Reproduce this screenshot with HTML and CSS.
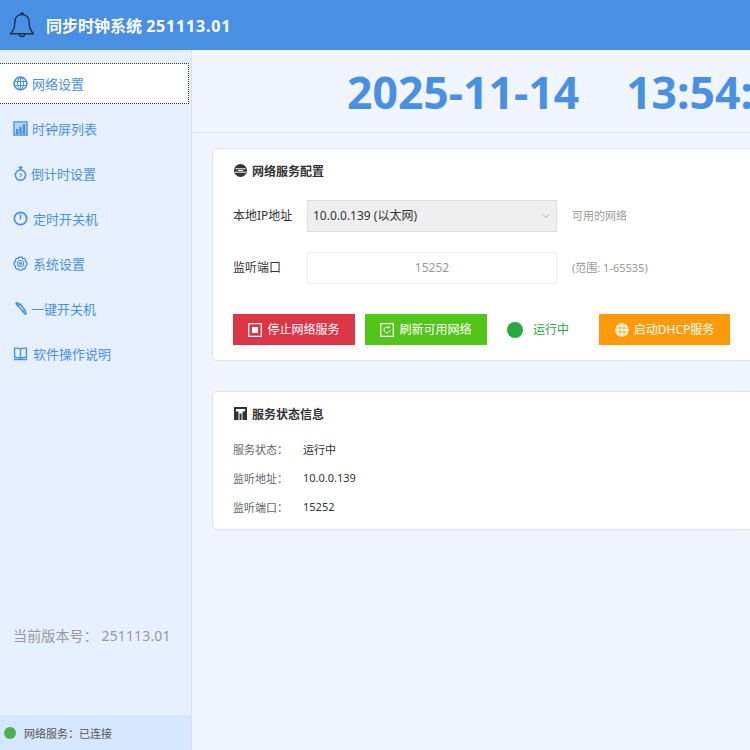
FILE: index.html
```html
<!DOCTYPE html>
<html lang="zh-CN">
<head>
    <meta charset="UTF-8">
    <title>同步时钟系统</title>
    <link rel="stylesheet" href="styles.css">
</head>
<body>
    <header class="topbar">
        <svg class="bell" viewBox="0 0 26 28" width="26" height="28" fill="none" stroke="#1f3350" stroke-width="1.5" stroke-linejoin="round">
            <path d="M13 3.500c-4.600 0-7.200 3.400-7.200 8 0 5-1 8-4.300 11.300h23C21.200 19.500 20.200 16.500 20.200 11.500c0-4.600-2.600-8-7.200-8z"/>
            <path d="M11.500 3.500c0-2 3-2 3 0"/>
            <path d="M10 23c.3 3.200 5.700 3.200 6 0"/>
        </svg>
        <span class="app_title">同步时钟系统 <span class="app_ver">251113.01</span></span>
    </header>

    <div class="layout">
        <aside class="sidebar">
            <ul class="nav">
                <li class="nav_item active">
                    <svg class="nav_icon" viewBox="0 0 16 16"><circle cx="8" cy="8" r="6.800" stroke-width="1.800"/><ellipse cx="8" cy="8" rx="3.200" ry="6.500"/><path d="M1.500 5.800h13M1.500 10.200h13M8 1.500v13"/></svg>
                    <span>网络设置</span>
                </li>
                <li class="nav_item">
                    <svg class="nav_icon" viewBox="0 0 16 16"><path class="pale" d="M1 1h14v14H1z"/><path class="solid" d="M3.200 8.500h2.600V14H3.200zM6.800 6h2.600v8H6.800zM10.400 3.500H13V14h-2.600z"/></svg>
                    <span>时钟屏列表</span>
                </li>
                <li class="nav_item">
                    <svg class="nav_icon" viewBox="0 0 16 16"><circle cx="8" cy="9.700" r="5.500" stroke-width="1.700"/><path d="M6 1.500h4M8 1.500v2.700" stroke-width="2"/><path d="M7 7.500l2.200 2.200L7 12"/></svg>
                    <span class="tight">倒计时设置</span>
                </li>
                <li class="nav_item">
                    <svg class="nav_icon" viewBox="0 0 16 16"><circle cx="8" cy="8" r="6.600" stroke-width="1.800"/><path class="solid" d="M7.200 3.500h1.600v5l-1.600.8z"/></svg>
                    <span class="wide">定时开关机</span>
                </li>
                <li class="nav_item">
                    <svg class="nav_icon" viewBox="0 0 16 16"><path d="M6.300 1.300h3.400l.6 1.500 1.800-.3 1.400 1.400-.4 1.800 1.600.9v3.200l-1.600.9.400 1.800-1.400 1.400-1.800-.3-.6 1.500H6.300l-.6-1.500-1.800.3-1.400-1.400.4-1.800-1.600-.9V6.600l1.600-.9-.4-1.800 1.400-1.400 1.800.3z" stroke-width="1.300"/><circle cx="8" cy="8" r="3.200"/><circle class="solid" cx="8" cy="8" r="1.500"/></svg>
                    <span class="wide">系统设置</span>
                </li>
                <li class="nav_item">
                    <svg class="nav_icon" viewBox="0 0 16 16"><path class="solid" d="M2.200 2.500L5 .8l2 2.200-2.600 3z"/><path class="pale" d="M5.500 5.200l2.500-2 4.600 6.300-2.300 2z"/><path d="M11 11.500l2.300 3.300M12.500 9.800l2 4" stroke-width="1.500"/></svg>
                    <span class="tight">一键开关机</span>
                </li>
                <li class="nav_item">
                    <svg class="nav_icon" viewBox="0 0 16 16"><path d="M8 3.300C6.500 2.300 4 2.100 1.700 2.300v10c2.300-.2 4.800 0 6.300 1 1.500-1 4-1.200 6.300-1v-10C12 2.100 9.500 2.300 8 3.300zM8 3.300v10" stroke-width="1.500"/><path d="M.8 14.500h14.400" stroke-width="1.400"/></svg>
                    <span class="wide">软件操作说明</span>
                </li>
            </ul>
            <div class="version">当前版本号： 251113.01</div>
            <div class="net_state">
                <i class="net_dot"></i>
                <span>网络服务：已连接</span>
            </div>
        </aside>

        <main class="content">
            <div class="clock">
                <span>2025-11-14</span>
                <span>13:54:27</span>
            </div>

            <section class="card">
                <h3 class="card_title">
                    <svg class="title_icon" viewBox="0 0 13 13"><circle cx="6.500" cy="6.500" r="6.500" fill="#333"/><path d="M1.500 4.800h10M1 8.200h11M4 6.500h5" stroke="#fff" fill="none"/></svg>
                    网络服务配置
                </h3>
                <div class="form_row">
                    <label class="form_label">本地IP地址</label>
                    <div class="select_box">
                        <span>10.0.0.139 (以太网)</span>
                        <svg class="chevron" viewBox="0 0 8 6" width="8" height="6"><path d="M1 1.500l3 3 3-3" fill="none" stroke="#aaa"/></svg>
                    </div>
                    <span class="hint">可用的网络</span>
                </div>
                <div class="form_row">
                    <label class="form_label">监听端口</label>
                    <div class="port_box">15252</div>
                    <span class="hint">(范围: 1-65535)</span>
                </div>
                <div class="actions">
                    <button class="btn btn_red">
                        <svg class="btn_icon" viewBox="0 0 14 14"><path d="M.7.700h12.600v12.600H.7z" fill="none" stroke="#fff" stroke-width="1.300"/><path d="M4 4h6v6H4z" fill="#fff"/></svg>
                        <span>停止网络服务</span>
                    </button>
                    <button class="btn btn_green">
                        <svg class="btn_icon" viewBox="0 0 14 14" fill="none" stroke="#fff"><path d="M.7.700h12.600v12.600H.7z" stroke-width="1.300"/><path d="M10 7a3 3 0 1 1-1.100-2.400M9.300 3.100v1.800H7.500"/></svg>
                        <span>刷新可用网络</span>
                    </button>
                    <i class="run_dot"></i>
                    <span class="run_text">运行中</span>
                    <button class="btn btn_orange">
                        <svg class="btn_icon" viewBox="0 0 14 14"><circle cx="7" cy="7" r="6.700" fill="#fff"/><path d="M1 5h12M1 9h12M5 1v12M9 1v12" stroke="#ff9a0a" stroke-width=".8" fill="none"/></svg>
                        <span>启动DHCP服务</span>
                    </button>
                </div>
            </section>

            <section class="card card_info">
                <h3 class="card_title">
                    <svg class="title_icon" viewBox="0 0 13 13"><path d="M0 0h13v13H0z" fill="#333"/><path d="M2 2h9v2.500H8.500V13h-4V4.500H2z" fill="#fff"/><path d="M5.500 6.500h2V13h-2z" fill="#333"/></svg>
                    服务状态信息
                </h3>
                <div class="info_row"><span class="info_label">服务状态：</span><span class="info_value">运行中</span></div>
                <div class="info_row"><span class="info_label">监听地址：</span><span class="info_value">10.0.0.139</span></div>
                <div class="info_row"><span class="info_label">监听端口：</span><span class="info_value">15252</span></div>
            </section>
        </main>
    </div>
</body>
</html>
```

FILE: styles.css
```css
*{
    margin: 0;
    padding: 0;
    box-sizing: border-box;
}
html, body{
    width: 750px;
    height: 750px;
    overflow: hidden;
}
body{
    font-family: "Noto Sans", "Noto Sans CJK SC", sans-serif;
    background: #f0f5ff;
    color: #333;
}
.topbar{
    height: 50px;
    background: #4a90e2;
    display: flex;
    align-items: center;
    gap: 11px;
    padding-left: 9px;
}
.app_title{
    color: #fff;
    font-size: 16px;
    font-weight: 700;
}
.app_ver{
    letter-spacing: 0.8px;
}
.layout{
    display: flex;
    height: 700px;
}

/* sidebar */
.sidebar{
    width: 192px;
    flex: none;
    background: #e6f0ff;
    border-right: 1px solid #d9e1ee;
    display: flex;
    flex-direction: column;
}
.nav{
    list-style: none;
    padding-top: 13px;
}
.nav_item{
    height: 41px;
    margin: 0 0 4px -2px;
    width: 191px;
    display: flex;
    align-items: center;
    gap: 4px;
    padding-left: 15px;
    font-size: 13px;
    color: #4a90e2;
}
.nav_item.active{
    background: #fff;
    outline: 1px dotted #333;
    outline-offset: -1px;
}
.nav_icon{
    width: 15px;
    height: 15px;
    flex: none;
    fill: none;
    stroke: #4a90e2;
    stroke-width: 1.100;
}
.nav_icon .solid{
    fill: #4a90e2;
    stroke: none;
}
.nav_icon .pale{
    fill: #b5d2f3;
    stroke-width: 1.400;
}
.tight{
    margin-left: -1px;
}
.wide{
    margin-left: 1px;
}
.version{
    margin-top: 248px;
    padding-left: 13px;
    font-size: 14px;
    line-height: 20px;
    letter-spacing: 0.13px;
    color: #999;
}
.net_state{
    margin-top: auto;
    height: 35px;
    background: #d6e8ff;
    border-top: 1px solid #dde5f0;
    display: flex;
    align-items: center;
    gap: 8px;
    padding-left: 4px;
    font-size: 11px;
    color: #555;
}
.net_dot{
    width: 12px;
    height: 12px;
    border-radius: 50%;
    background: #4caf50;
}

/* main */
.content{
    flex: none;
    width: 700px;
}
.clock{
    height: 83px;
    border-bottom: 1px solid #dde3ee;
    display: flex;
    align-items: center;
    gap: 47px;
    padding-left: 155px;
    font-size: 44.500px;
    font-weight: 700;
    color: #4a90e2;
    white-space: nowrap;
}
.card{
    width: 640px;
    margin: 15px 0 0 20px;
    height: 213px;
    padding: 13px 20px 0;
    background: #fff;
    border: 1px solid #dde3ee;
    border-radius: 5px;
}
.card_info{
    margin-top: 30px;
    height: 139px;
}
.card_title{
    display: flex;
    align-items: center;
    gap: 5px;
    height: 17px;
    font-size: 12px;
    font-weight: 700;
    color: #333;
}
.title_icon{
    width: 13px;
    height: 13px;
    margin-left: 1px;
}
.form_row{
    display: flex;
    align-items: center;
    height: 32px;
    margin-top: 20px;
    font-size: 12px;
}
.card_title + .form_row{
    margin-top: 21px;
}
.form_label{
    width: 74px;
    margin-top: -2px;
    color: #333;
}
.select_box{
    width: 250px;
    height: 32px;
    padding: 0 6px 0 5px;
    display: flex;
    align-items: center;
    justify-content: space-between;
    background: #efefef;
    border: 1px solid #ddd;
    color: #333;
}
.select_box span{
    margin-top: -2px;
}
.port_box{
    width: 250px;
    height: 32px;
    line-height: 29px;
    text-align: center;
    border: 1px solid #eee;
    color: #999;
}
.hint{
    margin: -2px 0 0 15px;
    font-size: 11px;
    color: #999;
}
.actions{
    display: flex;
    align-items: center;
    margin-top: 30px;
}
.btn{
    height: 31px;
    border: none;
    display: flex;
    align-items: center;
    justify-content: center;
    gap: 5px;
    font-family: inherit;
    font-size: 12px;
    color: #fff;
    width: 122px;
}
.btn span{
    margin-top: -2px;
}
.btn_icon{
    width: 14px;
    height: 14px;
}
.btn_red{
    background: #dc3545;
}
.btn_green{
    background: #52c41a;
    margin-left: 10px;
}
.btn_orange{
    background: #ff9a0a;
    width: 131px;
    margin-left: 30px;
}
.run_dot{
    width: 16px;
    height: 16px;
    margin-left: 20px;
    border-radius: 50%;
    background: #28a745;
}
.run_text{
    margin: -2px 0 0 10px;
    font-size: 12px;
    color: #28a745;
}
.info_row{
    display: flex;
    align-items: center;
    height: 29px;
    font-size: 11px;
}
.card_title + .info_row{
    margin-top: 12px;
}
.info_label{
    width: 70px;
    color: #666;
}
.info_value{
    color: #333;
}
```
